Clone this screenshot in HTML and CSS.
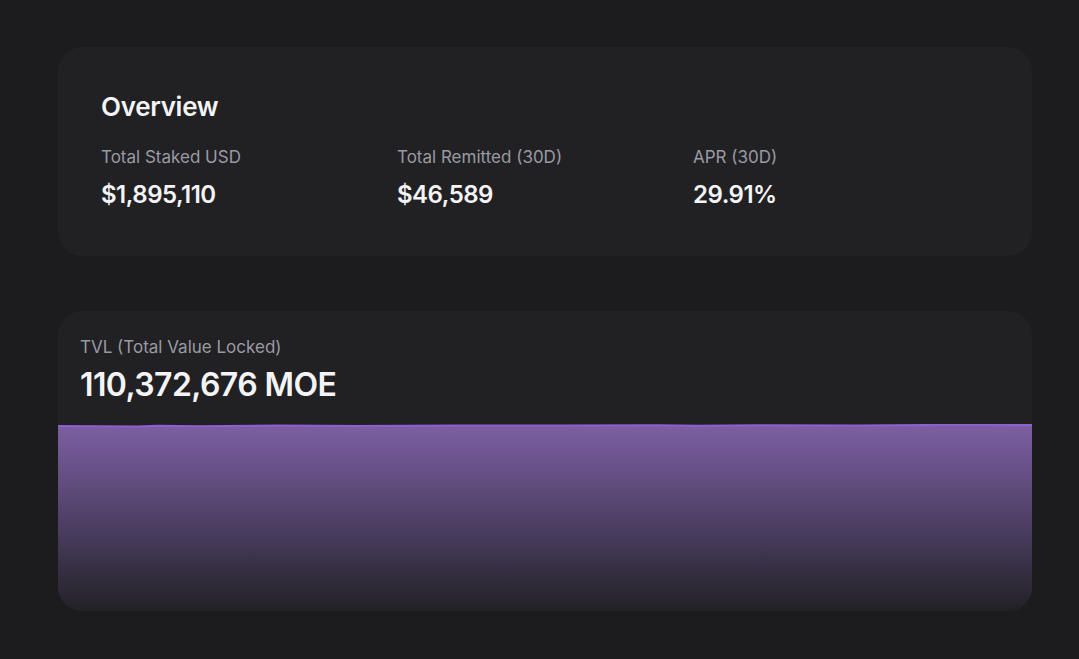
FILE: index.html
```html
<!DOCTYPE html>
<html lang="en">
<head>
<meta charset="utf-8">
<link rel="stylesheet" href="styles.css">
</head>
<body>
<main class="page">
  <section class="card overview">
    <h2 class="title">Overview</h2>
    <div class="stats">
      <div class="stat">
        <div class="label">Total Staked USD</div>
        <div class="value">$1,895,110</div>
      </div>
      <div class="stat">
        <div class="label">Total Remitted (30D)</div>
        <div class="value">$46,589</div>
      </div>
      <div class="stat">
        <div class="label">APR (30D)</div>
        <div class="value">29.91%</div>
      </div>
    </div>
  </section>
  <section class="card tvl">
    <div class="tvl-head">
      <div class="label">TVL (Total Value Locked)</div>
      <div class="big">110,372,676 MOE</div>
    </div>
    <svg class="chart" viewBox="0 0 974 187" preserveAspectRatio="none">
      <defs>
        <linearGradient id="g" x1="0" y1="0" x2="0" y2="1">
          <stop offset="0" stop-color="#7c5fa3"/>
          <stop offset="0.45" stop-color="#54446e"/>
          <stop offset="1" stop-color="#222126"/>
        </linearGradient>
      </defs>
      <path d="M0 2 L80 2.6 L100 1.8 L140 2.2 L220 1.6 L300 2 L400 1.4 L500 1.6 L600 1.2 L640 1.8 L700 1.2 L800 1.4 L900 0.8 L974 1 L974 187 L0 187 Z" fill="url(#g)"/>
      <path d="M0 2 L80 2.6 L100 1.8 L140 2.2 L220 1.6 L300 2 L400 1.4 L500 1.6 L600 1.2 L640 1.8 L700 1.2 L800 1.4 L900 0.8 L974 1" fill="none" stroke="#8e5fd0" stroke-width="2"/>
    </svg>
  </section>
</main>
</body>
</html>
```

FILE: styles.css
```css
html, body {
  margin: 0;
  padding: 0;
  background: #1c1c1e;
}
body {
  font-family: Inter, "Noto Sans", sans-serif;
  color: #f4f4f6;
}
.page {
  width: 974px;
  margin: 0 0 0 58px;
  padding-top: 47px;
  display: flex;
  flex-direction: column;
  gap: 55px;
}
.card {
  background: #212124;
  border-radius: 24px;
  overflow: hidden;
}
.overview {
  height: 209px;
  box-sizing: border-box;
  padding: 44px 43px 0 43px;
}
.title {
  margin: 0;
  font-size: 26px;
  font-weight: 600;
  line-height: 32px;
  letter-spacing: -0.3px;
}
.stats {
  display: grid;
  grid-template-columns: repeat(3, 1fr);
  margin-top: 23px;
}
.label {
  font-size: 17px;
  line-height: 22px;
  color: #9a9aa3;
  letter-spacing: 0;
}
.value {
  margin-top: 13px;
  font-size: 24px;
  font-weight: 600;
  line-height: 28px;
  letter-spacing: -0.5px;
}
.tvl {
  height: 300px;
  display: flex;
  flex-direction: column;
}
.tvl-head {
  padding: 25px 22px 0 22px;
}
.big {
  margin-top: 8px;
  font-size: 32px;
  font-weight: 600;
  line-height: 38px;
  letter-spacing: -0.6px;
}
.chart {
  display: block;
  width: 100%;
  height: 187px;
  margin-top: auto;
}
```
